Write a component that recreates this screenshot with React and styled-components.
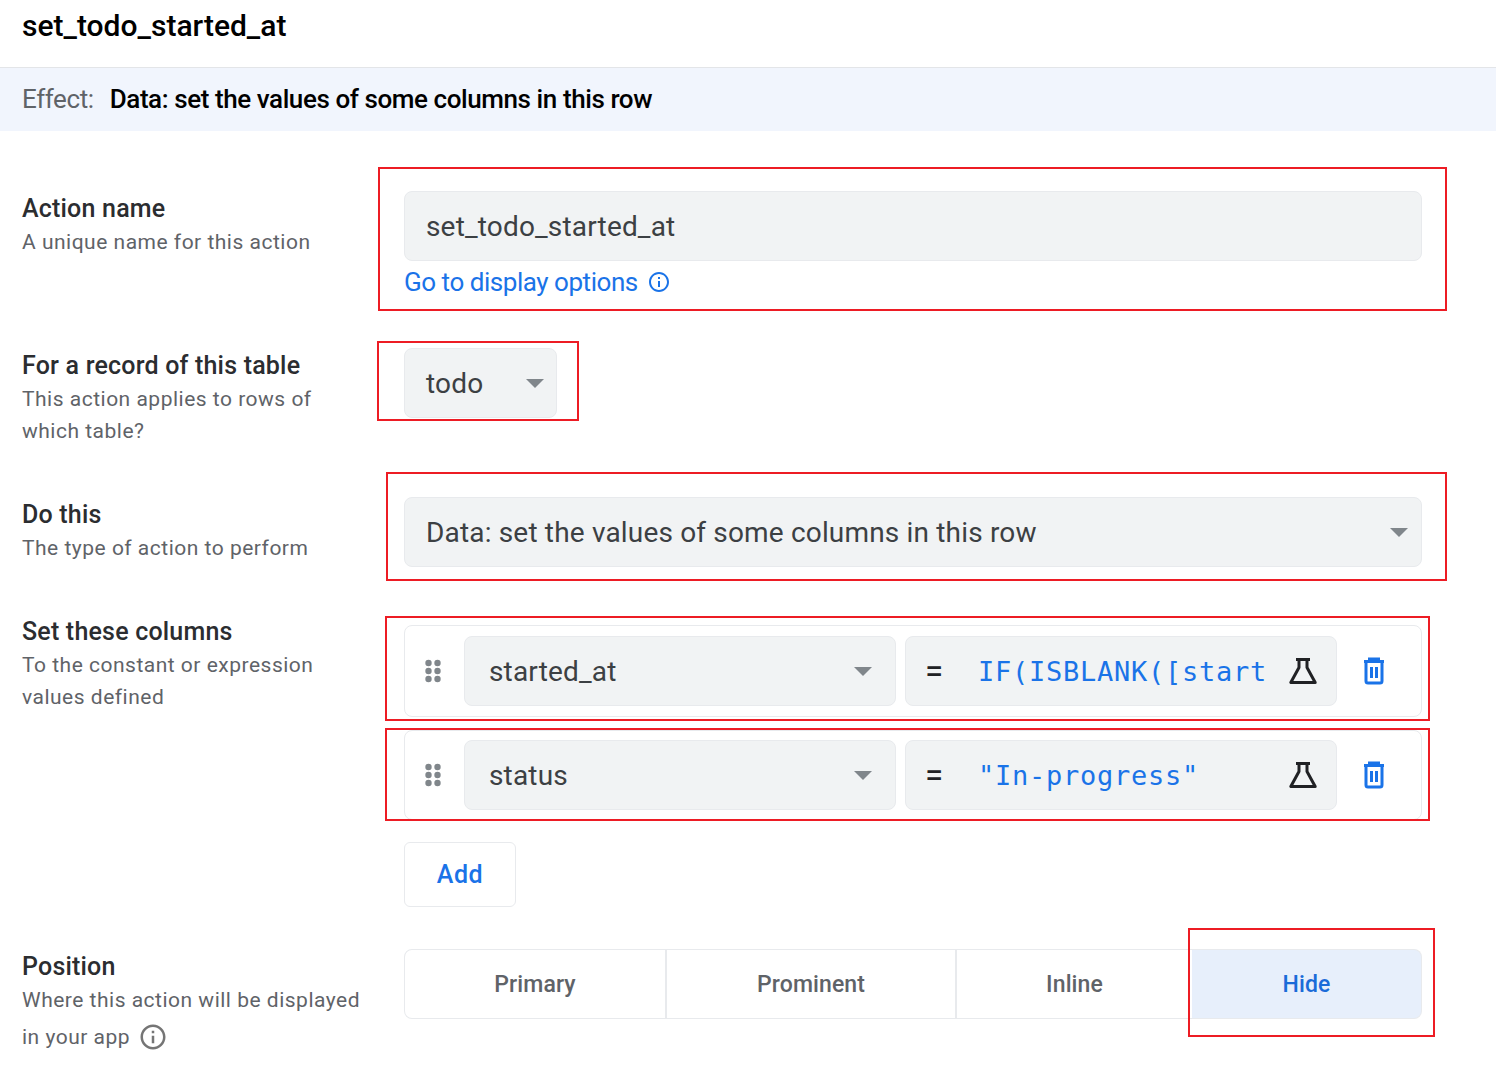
import styled, { createGlobalStyle } from "styled-components";

const GlobalStyle = createGlobalStyle`
  html, body {
    margin: 0;
    padding: 0;
    background: #fff;
    font-family: Roboto, "Noto Sans", sans-serif;
    color: #202124;
  }
  * { box-sizing: border-box; }
`;

const Page = styled.div`
  width: 1496px;
  height: 1080px;
  overflow: hidden;
  background: #fff;
`;

const Header = styled.div`
  height: 68px;
  padding: 7px 22px 0;
  border-bottom: 1px solid #e3e5e8;
  font-size: 30px;
  line-height: 38px;
  font-weight: 500;
  color: #000;
`;

const EffectBar = styled.div`
  height: 63px;
  padding: 0 22px 2px;
  display: flex;
  align-items: center;
  gap: 16px;
  background: #f1f5fd;
  font-size: 26px;
`;

const EffectLabel = styled.span`
  color: #5f6368;
  letter-spacing: -0.4px;
`;

const EffectValue = styled.span`
  color: #000;
  font-weight: 500;
  letter-spacing: -0.42px;
`;

const Form = styled.div`
  padding: 60px 74px 0 22px;
`;

const FormRow = styled.div`
  display: grid;
  grid-template-columns: 382px 1fr;
  padding-bottom: ${(p) => p.$after}px;
`;

const LabelCol = styled.div`
  display: flex;
  flex-direction: column;
`;

const Title = styled.div`
  font-size: 25px;
  line-height: 34px;
  margin-top: 1px;
  font-weight: 500;
  letter-spacing: 0.2px;
  color: #2b2d30;
`;

const Hint = styled.div`
  font-size: 21px;
  line-height: 32px;
  margin-top: ${(p) => p.$top || 0}px;
  letter-spacing: 0.5px;
  color: #5f6368;
  display: flex;
  flex-wrap: wrap;
  align-items: center;
  gap: 8px;
`;

const Annotated = styled.div`
  position: relative;
`;

const RedBox = styled.div`
  position: absolute;
  top: ${(p) => p.$top}px;
  left: ${(p) => p.$left}px;
  right: ${(p) => p.$right}px;
  bottom: ${(p) => p.$bottom}px;
  border: 2px solid #ed1c24;
  pointer-events: none;
`;

const Field = styled.div`
  height: 70px;
  display: flex;
  align-items: center;
  justify-content: space-between;
  padding: 0 ${(p) => p.$padRight || 13}px 0 ${(p) => p.$padLeft || 21}px;
  width: ${(p) => (p.$width ? `${p.$width}px` : "auto")};
  flex: ${(p) => (p.$grow ? "0 0 432px" : "none")};
  background: #f1f3f4;
  border: 1px solid #e8eaed;
  border-radius: 8px;
  font-size: 28px;
  letter-spacing: 0.17px;
  color: #3c4043;
`;

const Caret = styled.span`
  width: 0;
  height: 0;
  border-left: 9px solid transparent;
  border-right: 9px solid transparent;
  border-top: 9px solid #80868b;
`;

const HelpLink = styled.div`
  display: flex;
  align-items: center;
  gap: 9px;
  height: 42px;
  font-size: 26px;
  letter-spacing: -0.46px;
  color: #1a73e8;
`;

const ColumnCard = styled.div`
  height: ${(p) => p.$height}px;
  margin-top: ${(p) => p.$top}px;
  display: flex;
  align-items: center;
  gap: 9px;
  padding-left: 20px;
  border: 1px solid #e8eaed;
  border-radius: 8px;
`;

const ColumnStack = styled.div`
  padding-top: 11px;
`;

const DragHandle = styled.svg`
  width: 16px;
  height: 24px;
  margin-right: 14px;
  flex: none;
`;

const Equals = styled.span`
  font-size: 33px;
  font-weight: 400;
  color: #202124;
  width: 53px;
  flex: none;
`;

const Expression = styled.span`
  flex: 1;
  font-family: "DejaVu Sans Mono", "Liberation Mono", monospace;
  font-size: 27px;
  letter-spacing: 0.75px;
  color: #1a73e8;
  white-space: nowrap;
  overflow: hidden;
`;

const ExpressionField = styled(Field)`
  flex: 0 0 432px;
  justify-content: flex-start;
  padding: 0 18px 0 19px;
`;

const TrashButton = styled.svg`
  width: 30px;
  height: 30px;
  margin-left: 13px;
  flex: none;
`;

const AddButton = styled.div`
  width: 112px;
  height: 65px;
  margin-top: 22px;
  display: flex;
  align-items: center;
  justify-content: center;
  border: 1px solid #e8eaed;
  border-radius: 6px;
  font-size: 25px;
  font-weight: 500;
  letter-spacing: 0.5px;
  color: #1a73e8;
`;

const Segments = styled.div`
  display: grid;
  grid-template-columns: 263px 290px 235px 1fr;
  height: 70px;
`;

const Segment = styled.div`
  display: flex;
  align-items: center;
  justify-content: center;
  font-size: 23px;
  font-weight: 500;
  letter-spacing: 0.1px;
  color: ${(p) => (p.$active ? "#1a6bd8" : "#5f6368")};
  background: ${(p) => (p.$active ? "#e7effb" : "#fff")};
  border: 1px solid #e8eaed;
  border-left-width: ${(p) => (p.$first ? 1 : 0)}px;
  border-radius: ${(p) =>
    p.$first ? "8px 0 0 8px" : p.$active ? "0 8px 8px 0" : "0"};
  border-right-width: ${(p) => (p.$last ? 1 : p.$open ? 0 : 2)}px;
`;

function InfoIcon({ size, color }) {
  return (
    <svg width={size} height={size} viewBox="0 0 24 24" fill={color}>
      <path d="M11 7h2v2h-2zm0 4h2v6h-2zm1-9C6.48 2 2 6.48 2 12s4.48 10 10 10 10-4.48 10-10S17.52 2 12 2zm0 18c-4.41 0-8-3.59-8-8s3.59-8 8-8 8 3.59 8 8-3.59 8-8 8z" />
    </svg>
  );
}

function FlaskIcon() {
  return (
    <svg width="30" height="28" viewBox="0 0 30 28" fill="none" stroke="#202124" strokeWidth="3" style={{ flex: "none" }}>
      <path d="M8 2.500h14M11 2.500v8L2.800 25.500h24.400L19 10.500v-8" strokeLinejoin="round" />
    </svg>
  );
}

function Grip() {
  return (
    <DragHandle viewBox="0 0 16 24" fill="#80868b">
      {[4, 12, 20].map((y) => (
        <g key={y}>
          <circle cx="3.500" cy={y} r="3.200" />
          <circle cx="12.500" cy={y} r="3.200" />
        </g>
      ))}
    </DragHandle>
  );
}

function Trash() {
  return (
    <TrashButton viewBox="0 0 30 30" fill="none" stroke="#1a73e8" strokeWidth="3">
      <path d="M5 5.500h20M10.500 5.500V3h9v2.500" />
      <path d="M7 7v18a2 2 0 0 0 2 2h12a2 2 0 0 0 2-2V7" />
      <path d="M12.500 11v11M17.500 11v11" />
    </TrashButton>
  );
}

function ColumnRow({ name, expression, height, top, box }) {
  return (
    <Annotated>
      <ColumnCard $height={height} $top={top}>
        <Grip />
        <Field $grow $padLeft={24} $padRight={23}>
          {name}
          <Caret />
        </Field>
        <ExpressionField>
          <Equals>=</Equals>
          <Expression>{expression}</Expression>
          <FlaskIcon />
        </ExpressionField>
        <Trash />
      </ColumnCard>
      <RedBox {...box} />
    </Annotated>
  );
}

export default function App() {
  return (
    <Page>
      <GlobalStyle />
      <Header>set_todo_started_at</Header>
      <EffectBar>
        <EffectLabel>Effect:</EffectLabel>
        <EffectValue>Data: set the values of some columns in this row</EffectValue>
      </EffectBar>
      <Form>
        <FormRow $after={45}>
          <LabelCol>
            <Title>Action name</Title>
            <Hint>A unique name for this action</Hint>
          </LabelCol>
          <Annotated>
            <Field>set_todo_started_at</Field>
            <HelpLink>
              Go to display options
              <InfoIcon size={24} color="#1a73e8" />
            </HelpLink>
            <RedBox $top={-24} $left={-26} $right={-25} $bottom={-8} />
          </Annotated>
        </FormRow>

        <FormRow $after={50}>
          <LabelCol>
            <Title>For a record of this table</Title>
            <Hint>
              This action applies to rows of
              <br />
              which table?
            </Hint>
          </LabelCol>
          <Annotated>
            <Field $width={153} $padRight={12}>
              todo
              <Caret />
            </Field>
            <RedBox $top={-7} $left={-27} $right={843} $bottom={26} />
          </Annotated>
        </FormRow>

        <FormRow $after={47}>
          <LabelCol>
            <Title>Do this</Title>
            <Hint>The type of action to perform</Hint>
          </LabelCol>
          <Annotated>
            <Field>
              Data: set the values of some columns in this row
              <Caret />
            </Field>
            <RedBox $top={-25} $left={-18} $right={-25} $bottom={-14} />
          </Annotated>
        </FormRow>

        <FormRow $after={42}>
          <LabelCol>
            <Title>Set these columns</Title>
            <Hint>
              To the constant or expression
              <br />
              values defined
            </Hint>
          </LabelCol>
          <ColumnStack>
            <ColumnRow
              name="started_at"
              expression="IF(ISBLANK([start"
              height={92}
              top={0}
              box={{ $top: -9, $left: -19, $right: -8, $bottom: -4 }}
            />
            <ColumnRow
              name="status"
              expression={'"In-progress"'}
              height={90}
              top={13}
              box={{ $top: -2, $left: -19, $right: -8, $bottom: -1 }}
            />
            <AddButton>Add</AddButton>
          </ColumnStack>
        </FormRow>

        <FormRow $after={0}>
          <LabelCol>
            <Title>Position</Title>
            <Hint>Where this action will be displayed</Hint>
            <Hint $top={5}>
              in your app
              <InfoIcon size={30} color="#757575" />
            </Hint>
          </LabelCol>
          <Annotated>
            <Segments>
              <Segment $first>Primary</Segment>
              <Segment>Prominent</Segment>
              <Segment $open>Inline</Segment>
              <Segment $active $last>
                Hide
              </Segment>
            </Segments>
            <RedBox $top={-21} $left={784} $right={-13} $bottom={16} />
          </Annotated>
        </FormRow>
      </Form>
    </Page>
  );
}
